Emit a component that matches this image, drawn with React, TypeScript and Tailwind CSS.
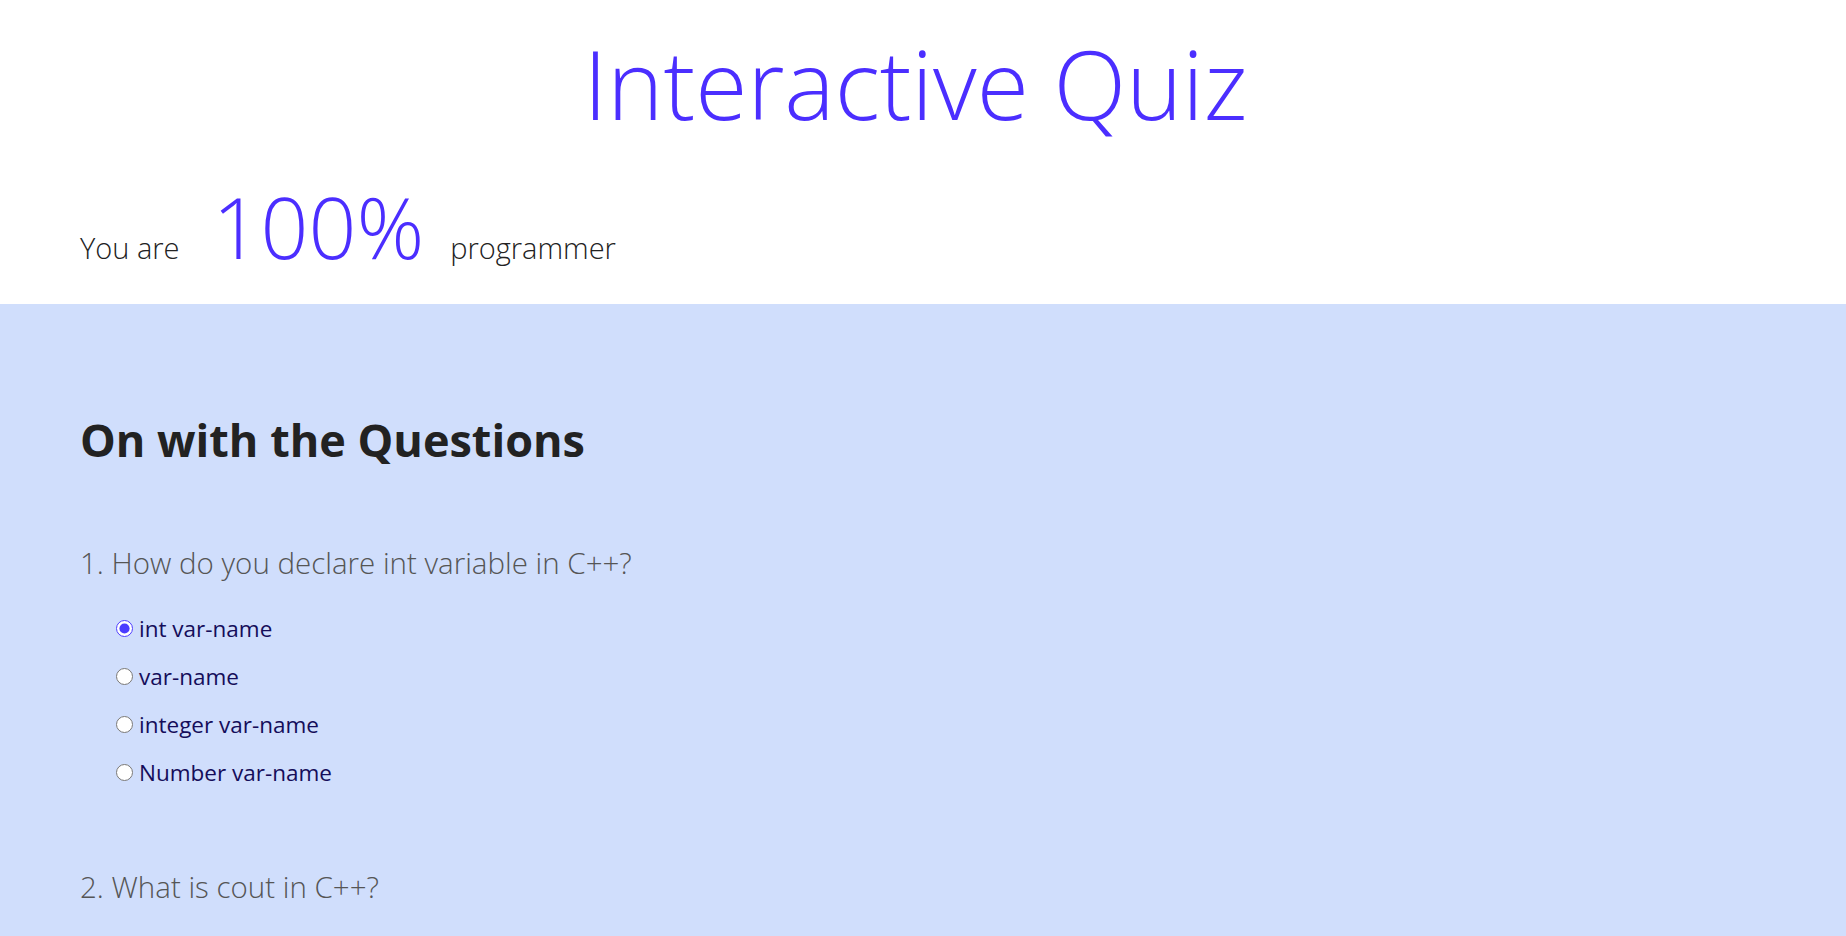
import React, { useState } from 'react'

const questions = [
  {
    text: 'How do you declare int variable in C++?',
    options: ['int var-name', 'var-name', 'integer var-name', 'Number var-name'],
  },
  {
    text: 'What is cout in C++?',
    options: ['An output stream object', 'A function', 'A keyword', 'A data type'],
  },
  {
    text: 'Which header file is needed to use cout?',
    options: ['<iostream>', '<stdio.h>', '<conio.h>', '<string>'],
  },
  {
    text: 'How do you end a statement in C++?',
    options: ['; (semicolon)', '. (dot)', ': (colon)', ', (comma)'],
  },
  {
    text: 'Which operator accesses a member through a pointer?',
    options: ['->', '.', '::', '*'],
  },
  {
    text: 'What is the size of char in C++?',
    options: ['1 byte', '2 bytes', '4 bytes', '8 bytes'],
  },
  {
    text: 'Which keyword is used to define a class?',
    options: ['class', 'object', 'define', 'type'],
  },
  {
    text: 'Which of these is used for comments in C++?',
    options: ['// comment', '# comment', '-- comment', '<!-- comment -->'],
  },
  {
    text: 'Which of these is a loop in C++?',
    options: ['for', 'if', 'switch', 'case'],
  },
]

const App = () => {
  const [answers, setAnswers] = useState<Record<number, number>>({ 0: 0 })

  return (
    <main className="font-['Open_Sans',sans-serif]">
      <header className="h-[304px] bg-white pl-20 pr-[95px] pt-[36px]">
        <h1 className="text-center text-[95px] font-light leading-none text-[#4b2eff]">
          Interactive Quiz
        </h1>
        <div className="mt-[54px] flex items-baseline">
          <span className="text-[29px] font-light leading-none text-[#222]">You are</span>
          <span className="ml-[33px] mr-[26px] text-[84px] font-light leading-none text-[#4b2eff]">100%</span>
          <span className="text-[29px] font-light leading-none text-[#222]">programmer</span>
        </div>
      </header>

      <section className="bg-[#d0defc] px-20 pt-[113px] pb-[100px]">
        <h2 className="text-[45px] font-bold leading-none text-[#222]">On with the Questions</h2>

        <div className="mt-[86px] flex flex-col gap-[75px]">
          {questions.map((q, qi) => (
            <div key={qi}>
              <h3 className="text-[29.5px] font-light leading-none text-[#555]">
                {qi + 1}. {q.text}
              </h3>
              <ul className="mt-[27px] pl-9">
                {q.options.map((opt, oi) => (
                  <li key={oi} className="flex h-12 items-center">
                    <label className="flex cursor-pointer items-center gap-[6px] text-[22.5px] leading-[48px] text-[#150d5a]">
                      <input
                        type="radio"
                        name={`q${qi}`}
                        checked={answers[qi] === oi}
                        onChange={() => setAnswers({ ...answers, [qi]: oi })}
                        className="m-0 h-[17px] w-[17px] accent-[#4b3cff]"
                      />
                      {opt}
                    </label>
                  </li>
                ))}
              </ul>
            </div>
          ))}
        </div>
      </section>
    </main>
  )
}

export default App
